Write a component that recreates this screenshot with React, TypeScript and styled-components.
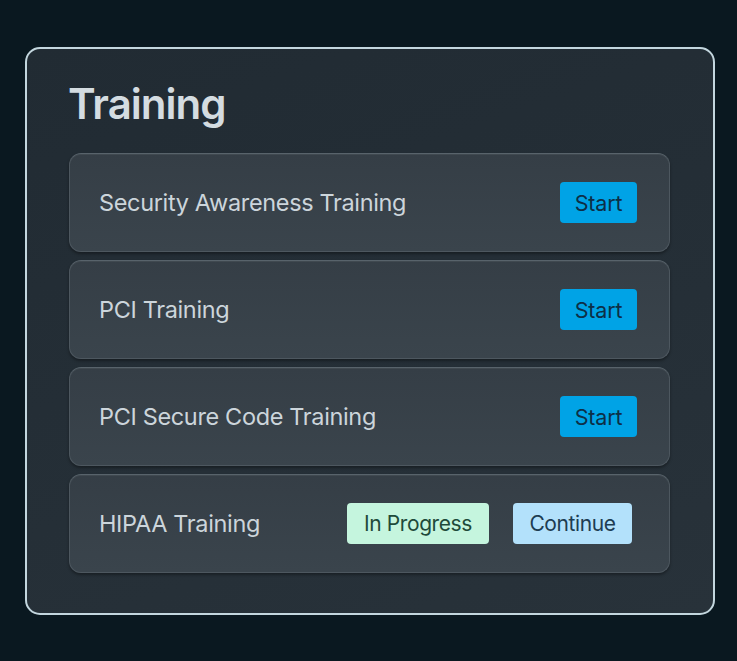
import React from 'react';
import styled, { createGlobalStyle } from 'styled-components';

const GlobalStyle = createGlobalStyle`
  html, body {
    margin: 0;
    padding: 0;
    background: #0a1820;
  }
  body {
    font-family: Inter, "Noto Sans", "Liberation Sans", sans-serif;
    -webkit-font-smoothing: antialiased;
  }
`;

const Page = styled.div`
  width: 737px;
  height: 661px;
  padding: 47px 0 0 25px;
  box-sizing: border-box;
`;

const Card = styled.section`
  width: 690px;
  height: 568px;
  box-sizing: border-box;
  border: 2px solid #c3d6de;
  border-radius: 15px;
  background: linear-gradient(160deg, #212b33 0%, #252f37 60%, #28323a 100%);
  padding: 34px 43px 0 42px;
  display: flex;
  flex-direction: column;
`;

const Title = styled.h1`
  margin: 0 0 28px -1px;
  font-size: 42px;
  line-height: 1;
  font-weight: 600;
  letter-spacing: -1px;
  color: #d4dce1;
`;

const List = styled.div`
  display: flex;
  flex-direction: column;
  gap: 8px;
`;

const Row = styled.div`
  height: 99px;
  box-sizing: border-box;
  display: flex;
  align-items: center;
  justify-content: space-between;
  padding: 0 32px 0 29px;
  border-radius: 12px;
  border: 1.5px solid #4d575f;
  border-top-color: #58636b;
  background: linear-gradient(180deg, #353e46 0%, #3a444c 100%);
  box-shadow: inset 0 1px 0 rgba(255, 255, 255, 0.06), 0 2px 3px rgba(0, 0, 0, 0.35);
`;

const Label = styled.span`
  font-size: 23.5px;
  font-weight: 400;
  color: #ccd5db;
  letter-spacing: -0.35px;
`;

const Actions = styled.div<{ $inset?: number }>`
  display: flex;
  align-items: center;
  gap: 24px;
  margin-right: ${({ $inset }) => $inset ?? 0}px;
`;

const Tag = styled.span<{ $bg: string; $fg: string; $w: number }>`
  display: inline-flex;
  align-items: center;
  justify-content: center;
  width: ${({ $w }) => $w}px;
  height: 41px;
  box-sizing: border-box;
  border-radius: 4px;
  background: ${({ $bg }) => $bg};
  color: ${({ $fg }) => $fg};
  font-size: 21px;
  font-weight: 400;
  letter-spacing: -0.4px;
`;

const StartButton = styled.button`
  width: 77px;
  height: 41px;
  border: none;
  border-radius: 4px;
  background: #00a3e6;
  color: #0d2f47;
  font-family: inherit;
  font-size: 21.5px;
  letter-spacing: -0.2px;
  padding: 0;
  cursor: pointer;
`;

const courses = ['Security Awareness Training', 'PCI Training', 'PCI Secure Code Training'];

const App: React.FC = () => {
  return (
    <>
      <GlobalStyle />
      <Page>
        <Card>
          <Title>Training</Title>
          <List>
            {courses.map((name) => (
              <Row key={name}>
                <Label>{name}</Label>
                <StartButton>Start</StartButton>
              </Row>
            ))}
            <Row>
              <Label>HIPAA Training</Label>
              <Actions $inset={5}>
                <Tag $bg="#c5f5de" $fg="#1e4a3a" $w={142}>In Progress</Tag>
                <Tag $bg="#b3e1fb" $fg="#1d3c52" $w={119}>Continue</Tag>
              </Actions>
            </Row>
          </List>
        </Card>
      </Page>
    </>
  );
};

export default App;
